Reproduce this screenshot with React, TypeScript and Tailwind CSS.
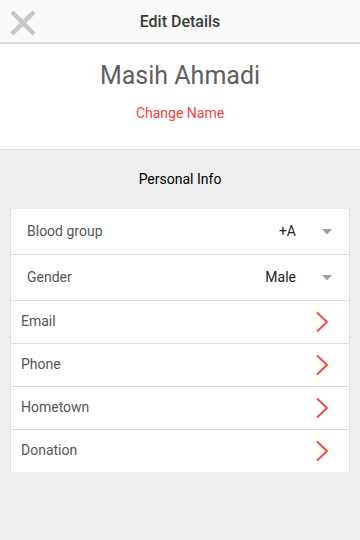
import { useState } from 'react';

const selects = [
  { label: 'Blood group', value: '+A' },
  { label: 'Gender', value: 'Male' },
];

const links = ['Email', 'Phone', 'Hometown', 'Donation'];

function Chevron() {
  return (
    <svg width="14" height="22" viewBox="0 0 14 22" fill="none">
      <path d="M2 1.5 L12 11 L2 20.5" stroke="#f44336" strokeWidth="1.8" />
    </svg>
  );
}

export default function App() {
  const [values] = useState(selects);

  return (
    <div className="w-[360px] h-[540px] bg-[#eeeeee] font-['Roboto',sans-serif] flex flex-col">
      {/* Header */}
      <div className="h-[44px] bg-[#fafafa] border-b-2 border-[#dddddd] flex items-center relative">
        <button className="absolute left-[9px] top-[9px] w-[28px] h-[28px] flex items-center justify-center">
          <svg width="26" height="26" viewBox="0 0 26 26">
            <path d="M2 2 L24 24 M24 2 L2 24" stroke="#c8c8c8" strokeWidth="4.5" />
          </svg>
        </button>
        <h1 className="flex-1 text-center text-[16px] font-medium text-[#3a3a3a] pt-[1px]">Edit Details</h1>
      </div>

      {/* Name */}
      <div className="h-[106px] bg-white border-b border-[#dddddd] flex flex-col items-center pt-[16px]">
        <div className="text-[25px] leading-[32px] text-[#5f5f5f]">Masih Ahmadi</div>
        <div className="text-[14px] mt-[11px] text-[#f44336]">Change Name</div>
      </div>

      <div className="text-center text-[14px] text-black pt-[19px] pb-[20px] leading-[20px]">Personal Info</div>

      {/* Card */}
      <div className="mx-[10px] bg-white border-x border-[#dddddd]">
        {values.map((s) => (
          <div key={s.label} className="h-[46px] border-b border-[#dddddd] flex items-center pl-[16px] pr-[17px]">
            <span className="flex-1 text-[14px] text-[#555555]">{s.label}</span>
            <span className="text-[14px] text-[#222222]">{s.value}</span>
            <svg className="ml-[26px]" width="10" height="6" viewBox="0 0 10 6">
              <path d="M0 0 L10 0 L5 5.5 Z" fill="#9e9e9e" />
            </svg>
          </div>
        ))}
        {links.map((l, i) => (
          <div
            key={l}
            className={`flex items-center pl-[10px] pr-[20px] pb-[1px] ${i < links.length - 1 ? 'h-[43px] border-b border-[#dddddd]' : 'h-[42px]'}`}
          >
            <span className="flex-1 text-[14px] text-[#555555]">{l}</span>
            <Chevron />
          </div>
        ))}
      </div>
    </div>
  );
}
